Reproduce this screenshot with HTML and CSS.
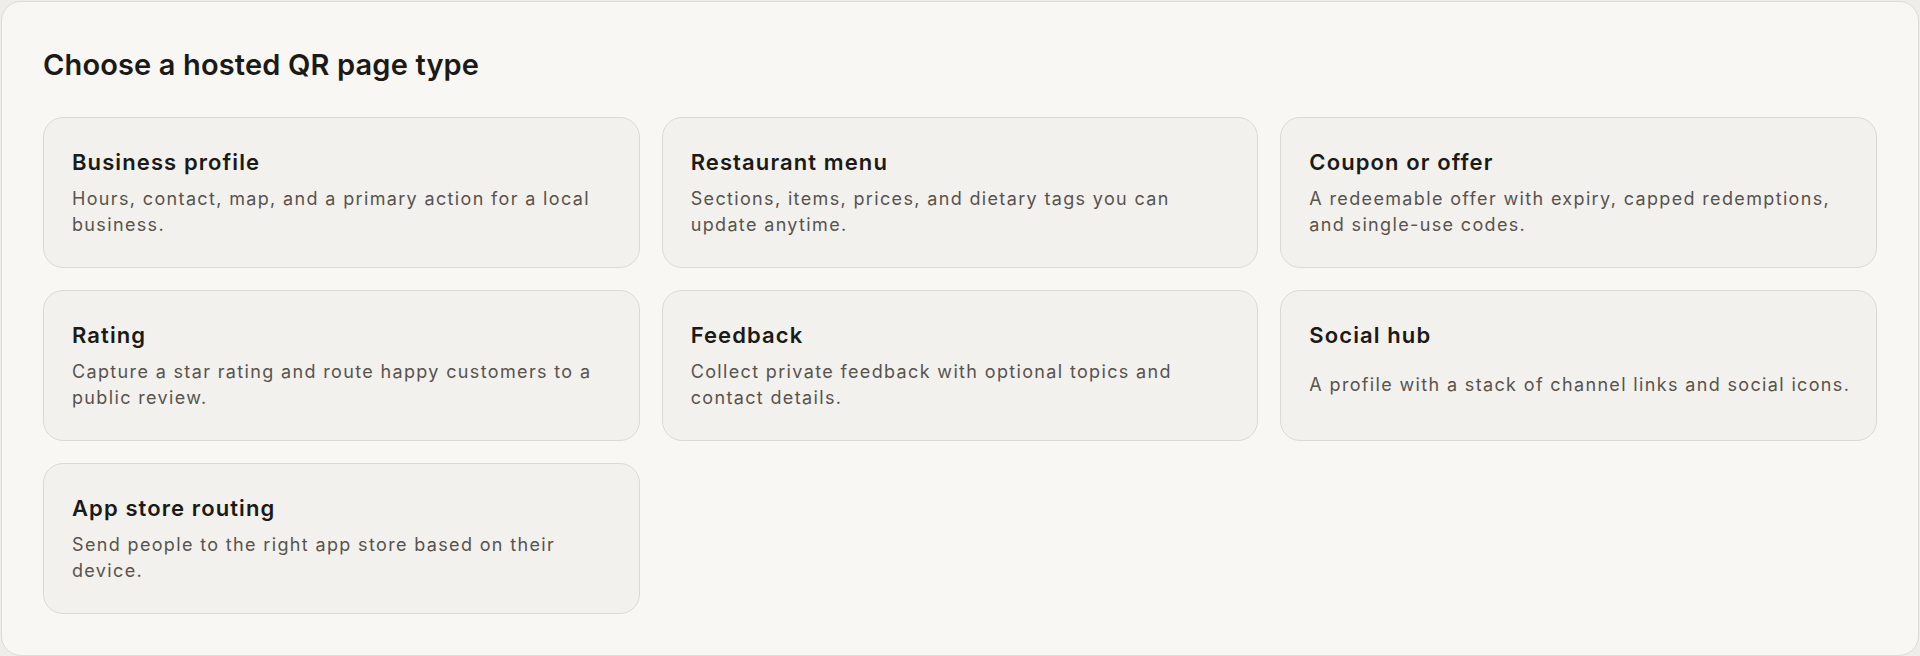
FILE: index.html
```html
<!DOCTYPE html>
<html lang="en">
<head>
    <meta charset="UTF-8">
    <title>Choose a hosted QR page type</title>
    <link rel="stylesheet" href="styles.css">
</head>
<body>

    <div class="painel">
        <h2 class="titulo">Choose a hosted QR page type</h2>

        <!-- Tipos de página -->
        <div class="grade">
            <div class="cartao">
                <h3>Business profile</h3>
                <p>Hours, contact, map, and a primary action for a local business.</p>
            </div>
            <div class="cartao">
                <h3>Restaurant menu</h3>
                <p>Sections, items, prices, and dietary tags you can update anytime.</p>
            </div>
            <div class="cartao">
                <h3>Coupon or offer</h3>
                <p>A redeemable offer with expiry, capped redemptions, and single-use codes.</p>
            </div>
            <div class="cartao">
                <h3>Rating</h3>
                <p>Capture a star rating and route happy customers to a public review.</p>
            </div>
            <div class="cartao">
                <h3>Feedback</h3>
                <p>Collect private feedback with optional topics and contact details.</p>
            </div>
            <div class="cartao">
                <h3>Social hub</h3>
                <p>A profile with a stack of channel links and social icons.</p>
            </div>
            <div class="cartao">
                <h3>App store routing</h3>
                <p>Send people to the right app store based on their device.</p>
            </div>
        </div>
    </div>

</body>
</html>
```

FILE: styles.css
```css
body {
    margin: 0;
    background-color: #eeede9;
    font-family: Inter, "Noto Sans", sans-serif;
}

/* Painel principal */
.painel {
    margin: 1px;
    padding: 41px;
    background-color: #f8f7f4;
    border: 1px solid #dedcd7;
    border-radius: 20px;
}

.titulo {
    margin: 0 0 30px;
    font-size: 29px;
    line-height: 44px;
    font-weight: 600;
    letter-spacing: 0.005em;
    color: #1b1a17;
}

/* Grade com os tipos */
.grade {
    display: grid;
    grid-template-columns: repeat(3, 1fr);
    gap: 22px;
}

.cartao {
    display: flex;
    flex-direction: column;
    padding: 30px 20px 29px 28px;
    background-color: #f2f1ed;
    border: 1px solid #dcdad5;
    border-radius: 20px;
}

.cartao h3 {
    margin: 0 0 10px;
    font-size: 22px;
    line-height: 28px;
    font-weight: 600;
    letter-spacing: 0.05em;
    color: #1b1a17;
}

.cartao p {
    flex: 1;
    display: flex;
    align-items: center;
    margin: 0;
    font-size: 18px;
    line-height: 26px;
    letter-spacing: 0.075em;
    color: #58534d;
}
```
